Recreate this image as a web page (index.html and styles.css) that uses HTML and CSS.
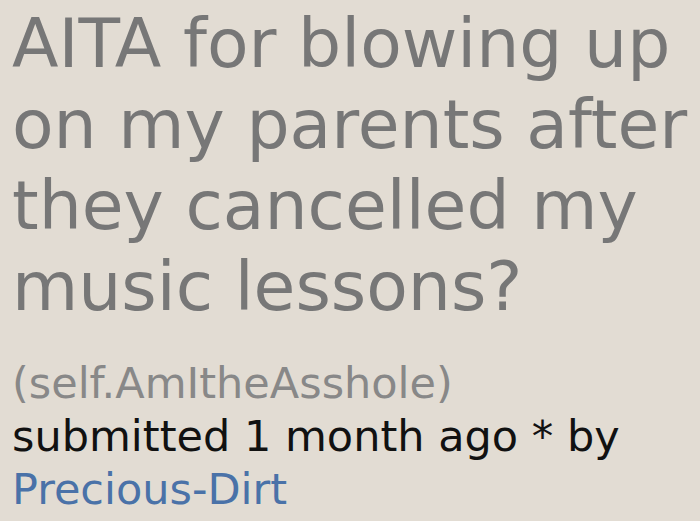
FILE: index.html
```html
<!DOCTYPE html>
<html>
<head>
<meta charset="utf-8">
<link rel="stylesheet" href="styles.css">
</head>
<body>
<div class="post">
  <h1 class="title">AITA for blowing up on my parents after they cancelled my music lessons?</h1>
  <div class="domain">(self.AmItheAsshole)</div>
  <div class="tagline">submitted 1 month ago * by</div>
  <a class="author" href="#">Precious-Dirt</a>
</div>
</body>
</html>
```
FILE: styles.css
```css
html, body {
  margin: 0;
  padding: 0;
  background: #e2dcd3;
  width: 700px;
  height: 521px;
  overflow: hidden;
}
.post {
  font-family: "DejaVu Sans", Verdana, sans-serif;
  padding: 3px 8px 0 12px;
}
.title {
  margin: 0;
  font-weight: normal;
  font-size: 68px;
  line-height: 81px;
  color: #777777;
}
.domain {
  margin-top: 30px;
  font-size: 43px;
  line-height: 53px;
  color: #888888;
}
.tagline {
  font-size: 43px;
  line-height: 53px;
  color: #111111;
}
.author {
  display: block;
  font-size: 43px;
  line-height: 53px;
  color: #4a72a8;
  text-decoration: none;
}
```
